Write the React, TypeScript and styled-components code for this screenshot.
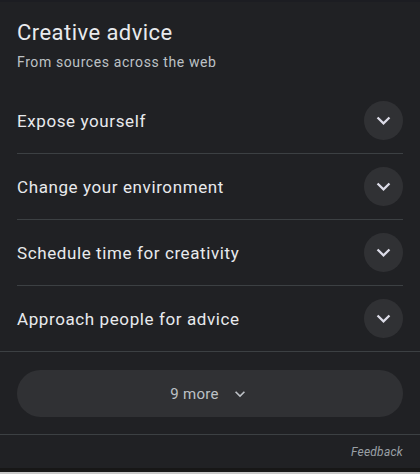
import styled, { createGlobalStyle } from "styled-components";

const GlobalStyle = createGlobalStyle`
  html, body {
    margin: 0;
    padding: 0;
    background: #202124;
  }
  body {
    font-family: Roboto, "Liberation Sans", sans-serif;
  }
`;

const items = [
  "Expose yourself",
  "Change your environment",
  "Schedule time for creativity",
  "Approach people for advice",
];

const Chevron = ({ size }: { size: number }) => (
  <svg width={size} height={size} viewBox="0 0 24 24" fill="currentColor">
    <path d="M7.41 8.59 12 13.17l4.59-4.58L18 10l-6 6-6-6 1.41-1.41z" />
  </svg>
);

const App = () => {
  return (
    <>
      <GlobalStyle />
      <Panel>
        <TopEdge />
        <Header>
          <Title>Creative advice</Title>
          <Subtitle>From sources across the web</Subtitle>
        </Header>
        <List>
          {items.map((text, i) => (
            <Row key={text} $last={i === items.length - 1}>
              <RowText>{text}</RowText>
              <ExpandButton>
                <Chevron size={27} />
              </ExpandButton>
            </Row>
          ))}
        </List>
        <MoreSection>
          <MoreButton>
            9 more
            <Chevron size={20} />
          </MoreButton>
        </MoreSection>
        <Footer>
          <FeedbackLink>Feedback</FeedbackLink>
        </Footer>
        <BottomEdge />
      </Panel>
    </>
  );
};

const Panel = styled.div`
  width: 420px;
  height: 474px;
  background: #202124;
  display: flex;
  flex-direction: column;
  overflow: hidden;
`;

const TopEdge = styled.div`
  height: 2px;
  background: #1c1d22;
`;

const Header = styled.div`
  padding: 17px 17px 0;
  display: flex;
  flex-direction: column;
`;

const Title = styled.div`
  color: #e8eaed;
  font-size: 22px;
  line-height: 28px;
  letter-spacing: 0.45px;
`;

const Subtitle = styled.div`
  color: #bdc1c6;
  font-size: 14px;
  line-height: 20px;
  margin-top: 5px;
  letter-spacing: 0.6px;
`;

const List = styled.div`
  margin-top: 16px;
  display: flex;
  flex-direction: column;
`;

const Row = styled.div<{ $last?: boolean }>`
  height: 65px;
  margin: ${(p) => (p.$last ? "0" : "0 17px")};
  padding: ${(p) => (p.$last ? "0 17px" : "0")};
  display: flex;
  align-items: center;
  justify-content: space-between;
  border-bottom: 1px solid #3c4043;
`;

const RowText = styled.div`
  color: #e8eaed;
  font-size: 17px;
  letter-spacing: 0.6px;
`;

const ExpandButton = styled.div`
  width: 39px;
  height: 39px;
  border-radius: 50%;
  background: #303134;
  color: #dcdce8;
  display: flex;
  align-items: center;
  justify-content: center;
`;

const MoreSection = styled.div`
  padding: 18px 17px 17px;
  border-bottom: 1px solid #3c4043;
`;

const MoreButton = styled.div`
  height: 47px;
  border-radius: 24px;
  background: #303134;
  color: #bdc1c6;
  font-size: 15px;
  letter-spacing: 0.3px;
  display: flex;
  align-items: center;
  justify-content: center;
  gap: 11px;
`;

const Footer = styled.div`
  flex: 1;
  display: flex;
  justify-content: flex-end;
  align-items: flex-start;
  padding: 9px 17px 0;
`;

const FeedbackLink = styled.span`
  color: #9aa0a6;
  font-size: 12px;
  font-style: italic;
  line-height: 16px;
  letter-spacing: 0.25px;
`;

const BottomEdge = styled.div`
  height: 4px;
  background: #171717;
  border-bottom: 2px solid #c8c8c8;
`;

export default App;
